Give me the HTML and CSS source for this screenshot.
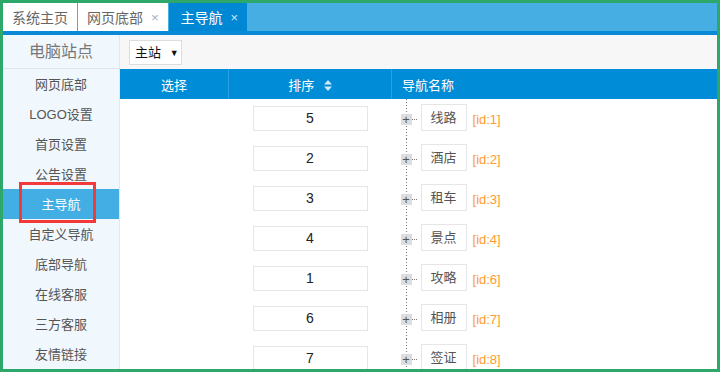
FILE: index.html
```html
<!DOCTYPE html>
<html lang="zh-CN">
<head>
  <meta charset="UTF-8" />
  <title>主导航</title>
  <link rel="stylesheet" href="styles.css">
</head>
<body>
  <div class="frame">

    <!-- 顶部标签 -->
    <div class="tabs">
      <div class="tab">系统主页</div>
      <div class="tab">网页底部<span class="close">×</span></div>
      <div class="tab active">主导航<span class="close">×</span></div>
    </div>

    <div class="main">
      <aside class="side">
        <div class="side-title">电脑站点</div>
        <ul class="side-menu">
          <li>网页底部</li>
          <li>LOGO设置</li>
          <li>首页设置</li>
          <li>公告设置</li>
          <li class="on"><span class="mark">主导航</span></li>
          <li>自定义导航</li>
          <li>底部导航</li>
          <li>在线客服</li>
          <li>三方客服</li>
          <li>友情链接</li>
        </ul>
      </aside>

      <section class="content">
        <div class="toolbar">
          <div class="select">主站 <span class="arrow">▼</span></div>
        </div>
        <table class="grid">
          <thead>
            <tr>
              <th class="c-check">选择</th>
              <th class="c-sort">排序
                <svg class="sort" width="8" height="11" viewBox="0 0 8 11">
                  <path d="M4 0 L8 4.5 H0 Z M0 6.5 H8 L4 11 Z" fill="#d2eaf8"/>
                </svg>
              </th>
              <th class="c-name">导航名称</th>
            </tr>
          </thead>
          <tbody id="rows"></tbody>
        </table>
      </section>
    </div>
  </div>

  <script>
    var navs = [
      { sort: 5, name: "线路", id: 1 },
      { sort: 2, name: "酒店", id: 2 },
      { sort: 3, name: "租车", id: 3 },
      { sort: 4, name: "景点", id: 4 },
      { sort: 1, name: "攻略", id: 6 },
      { sort: 6, name: "相册", id: 7 },
      { sort: 7, name: "签证", id: 8 }
    ];

    var html = "";
    navs.forEach(function (n) {
      html += '<tr>' +
        '<td></td>' +
        '<td class="c-sort"><input class="sort-input" value="' + n.sort + '"></td>' +
        '<td class="tree"><span class="plus">+</span><span class="dots"></span>' +
        '<span class="name">' + n.name + '</span><span class="nid">[id:' + n.id + ']</span></td>' +
        '</tr>';
    });
    document.getElementById("rows").innerHTML = html;
  </script>
</body>
</html>
```

FILE: styles.css
```css
body {
  margin: 0;
  font-family: "Liberation Sans", "Noto Sans CJK SC", sans-serif;
  font-size: 13px;
  color: #555;
}

.frame {
  height: 372px;
  box-sizing: border-box;
  border: 3px solid #2ea86a;
  display: flex;
  flex-direction: column;
  overflow: hidden;
}

/* tabs */
.tabs {
  display: flex;
  height: 28px;
  background: #47aee4;
  border-bottom: 4px solid #0a8ad6;
}

.tab {
  display: flex;
  align-items: center;
  padding: 0 9px;
  margin-right: 1px;
  background: #fff;
  color: #666;
  font-size: 14px;
}

.tab .close {
  margin-left: 8px;
  font-size: 13px;
  color: #aac;
}

.tab.active {
  background: #0088d5;
  color: #fff;
  padding-left: 12px;
}

.tab.active .close {
  color: #cde6f6;
}

.main {
  flex: 1;
  display: flex;
  min-height: 0;
}

/* sidebar */
.side {
  width: 116px;
  background: #f1f8fd;
  border-right: 1px solid #dfe8f0;
}

.side-title {
  height: 33px;
  line-height: 33px;
  text-align: center;
  font-size: 16px;
  color: #777;
  border-bottom: 1px solid #dde6ee;
}

.side-menu {
  list-style: none;
  margin: 0;
  padding: 0;
}

.side-menu li {
  height: 30px;
  line-height: 31px;
  text-align: center;
  color: #555;
}

.side-menu li.on {
  background: #42aee4;
  color: #fff;
}

.side-menu .mark {
  position: relative;
}

.side-menu .mark::after {
  content: "";
  position: absolute;
  left: -22px;
  right: -15px;
  top: -15px;
  bottom: -11px;
  border: 3px solid #f23a3a;
}

/* content */
.content {
  flex: 1;
  background: #fff;
}

.toolbar {
  height: 34px;
  background: #f7f7f7;
  padding: 5px 9px 0;
  box-sizing: border-box;
}

.select {
  display: inline-block;
  width: 46px;
  height: 23px;
  line-height: 23px;
  border: 1px solid #ddd;
  background: #fff;
  color: #111;
  font-size: 13px;
  padding-left: 5px;
}

.select .arrow {
  font-size: 9px;
  margin-left: 5px;
  vertical-align: 1px;
}

.grid {
  width: 100%;
  border-collapse: collapse;
  table-layout: fixed;
}

.grid th {
  height: 30px;
  padding: 0;
  background: #008cd6;
  color: #fff;
  font-weight: normal;
  font-size: 13px;
  border-left: 1px solid #2a9fe2;
}

.grid th:first-child {
  border-left: none;
}

.grid .c-check {
  width: 108px;
}

.grid .c-sort {
  width: 162px;
  text-align: center;
}

.grid th.c-name {
  text-align: left;
  padding-left: 10px;
}

.sort {
  margin-left: 6px;
  vertical-align: -1px;
}

.grid td {
  height: 40px;
  padding: 0;
}

.sort-input {
  width: 115px;
  height: 25px;
  box-sizing: border-box;
  border: 1px solid #e6e6e6;
  text-align: center;
  font-family: "Liberation Sans", sans-serif;
  font-size: 14px;
  color: #222;
  outline: none;
  padding: 0;
  margin-top: -2px;
}

.tree {
  padding-left: 9px !important;
  background: repeating-linear-gradient(to bottom, #777 0 1px, transparent 1px 3px) 14px 0 / 1px 100% no-repeat;
  white-space: nowrap;
}

.plus {
  display: inline-block;
  width: 11px;
  height: 11px;
  line-height: 11px;
  background: #ddd;
  color: #555;
  text-align: center;
  font-size: 13px;
  vertical-align: middle;
}

.dots {
  display: inline-block;
  width: 5px;
  border-top: 1px dotted #777;
  vertical-align: middle;
  margin-right: 4px;
}

.name {
  display: inline-block;
  height: 25px;
  line-height: 25px;
  padding: 0 9px;
  border: 1px solid #e6e6e6;
  background: #fff;
  color: #555;
  font-size: 13px;
  vertical-align: middle;
  margin-top: -3px;
}

.nid {
  color: #ff9a2e;
  font-size: 13px;
  margin-left: 6px;
  vertical-align: middle;
}
```
